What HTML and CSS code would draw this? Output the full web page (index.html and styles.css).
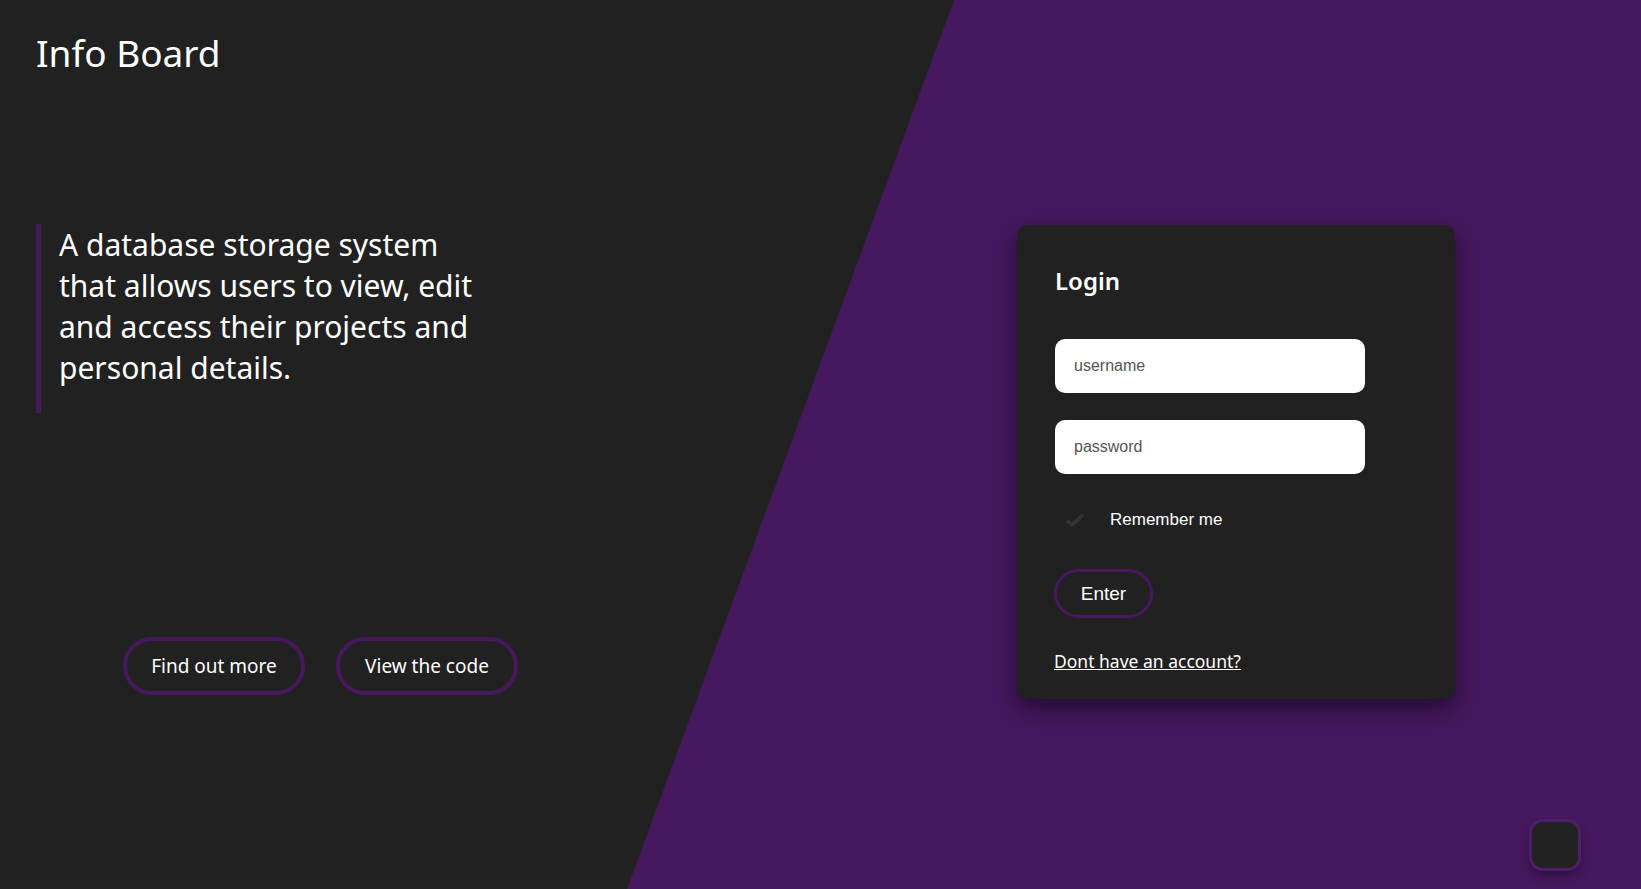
FILE: index.html
```html
<!DOCTYPE html>
<html lang="en">
<head>
<meta charset="utf-8">
<title>Info Board</title>
<link rel="stylesheet" href="styles.css">
</head>
<body>
<div class="page">
  <section class="intro">
    <h1 class="brand">Info Board</h1>
    <blockquote class="tagline">
      <p>A database storage system that allows users to view, edit and access their projects and personal details.</p>
    </blockquote>
    <div class="actions">
      <a class="pill" href="#">Find out more</a>
      <a class="pill" href="#">View the code</a>
    </div>
  </section>
  <section class="auth">
    <form class="card">
      <h2 class="card-title">Login</h2>
      <input class="field" type="text" placeholder="username">
      <input class="field field-second" type="password" placeholder="password">
      <label class="remember">
        <svg class="check" width="20" height="16" viewBox="0 0 20 16" aria-hidden="true"><path d="M2 8.5 L7 13 L18 2.5" fill="none" stroke="#353535" stroke-width="3.6" stroke-linejoin="round"/></svg>
        <span class="remember-text">Remember me</span>
      </label>
      <button class="enter" type="button">Enter</button>
      <a class="signup" href="#">Dont have an account?</a>
    </form>
  </section>
</div>
<div class="fab"></div>
</body>
</html>
```

FILE: styles.css
```css
html, body {
  margin: 0;
  padding: 0;
  height: 100%;
}
body {
  background: #212121;
  color: #fff;
  font-family: "Noto Sans", "Open Sans", "Liberation Sans", sans-serif;
  overflow: hidden;
}
.page {
  position: relative;
  display: flex;
  height: 889px;
  isolation: isolate;
}
.page::before {
  content: "";
  position: absolute;
  inset: 0;
  background: #46185e;
  clip-path: polygon(954px 0, 100% 0, 100% 100%, 627px 100%);
  z-index: -1;
}
.intro {
  box-sizing: border-box;
  width: 640px;
  display: flex;
  flex-direction: column;
  padding-left: 34px;
}
.brand {
  margin: 26px 0 0 2px;
  font-size: 37px;
  font-weight: 400;
  line-height: 53px;
}
.tagline {
  margin: 145px 0 0 2px;
  border-left: 5px solid #46185e;
  padding: 0 0 25px 18px;
}
.tagline p {
  margin: 0;
  width: 430px;
  font-size: 30px;
  line-height: 41px;
}
.actions {
  display: flex;
  gap: 31px;
  margin: 224px 0 0 89px;
}
.pill {
  box-sizing: border-box;
  display: flex;
  align-items: center;
  justify-content: center;
  width: 182px;
  height: 58px;
  border: 4px solid #46185e;
  border-radius: 30px;
  color: #fff;
  text-decoration: none;
  font-size: 19px;
}
.auth {
  flex: 1;
  display: flex;
  align-items: flex-start;
  padding: 225px 0 0 377px;
}
.card {
  box-sizing: border-box;
  width: 438px;
  height: 474px;
  background: #212121;
  border-radius: 10px;
  padding: 37px 36px 0 38px;
  display: flex;
  flex-direction: column;
  align-items: flex-start;
  box-shadow: 0 10px 22px rgba(10, 0, 20, 0.55);
}
.card-title {
  margin: 0;
  font-size: 24px;
  font-weight: 600;
  line-height: 37px;
}
.field {
  box-sizing: border-box;
  width: 310px;
  height: 54px;
  margin-top: 40px;
  border: 0;
  border-radius: 10px;
  background: #fff;
  padding: 0 19px;
  font-family: "Liberation Sans", Arial, sans-serif;
  font-size: 16px;
  color: #222;
  outline: none;
}
.field::placeholder {
  color: #555;
}
.field-second {
  margin-top: 27px;
}
.remember {
  display: flex;
  align-items: center;
  height: 24px;
  margin-top: 34px;
}
.check {
  margin-left: 10px;
  margin-right: 25px;
}
.remember-text {
  font-family: "Liberation Sans", Arial, sans-serif;
  font-size: 17px;
  font-weight: 400;
}
.enter {
  box-sizing: border-box;
  width: 99px;
  height: 49px;
  margin-top: 37px;
  border: 3px solid #46185e;
  border-radius: 25px;
  background: #212121;
  color: #fff;
  font-family: "Liberation Sans", Arial, sans-serif;
  font-size: 19px;
  padding: 0;
  margin-left: -1px;
}
.signup {
  margin-top: 31px;
  margin-left: -1px;
  color: #fff;
  font-size: 17.5px;
  line-height: 24px;
}
.fab {
  position: fixed;
  right: 63px;
  bottom: 21px;
  width: 46px;
  height: 46px;
  background: #222;
  border-radius: 11px;
  box-shadow: 0 0 0 3px #4d1e69, 0 6px 12px rgba(10, 0, 20, 0.5);
}
```
